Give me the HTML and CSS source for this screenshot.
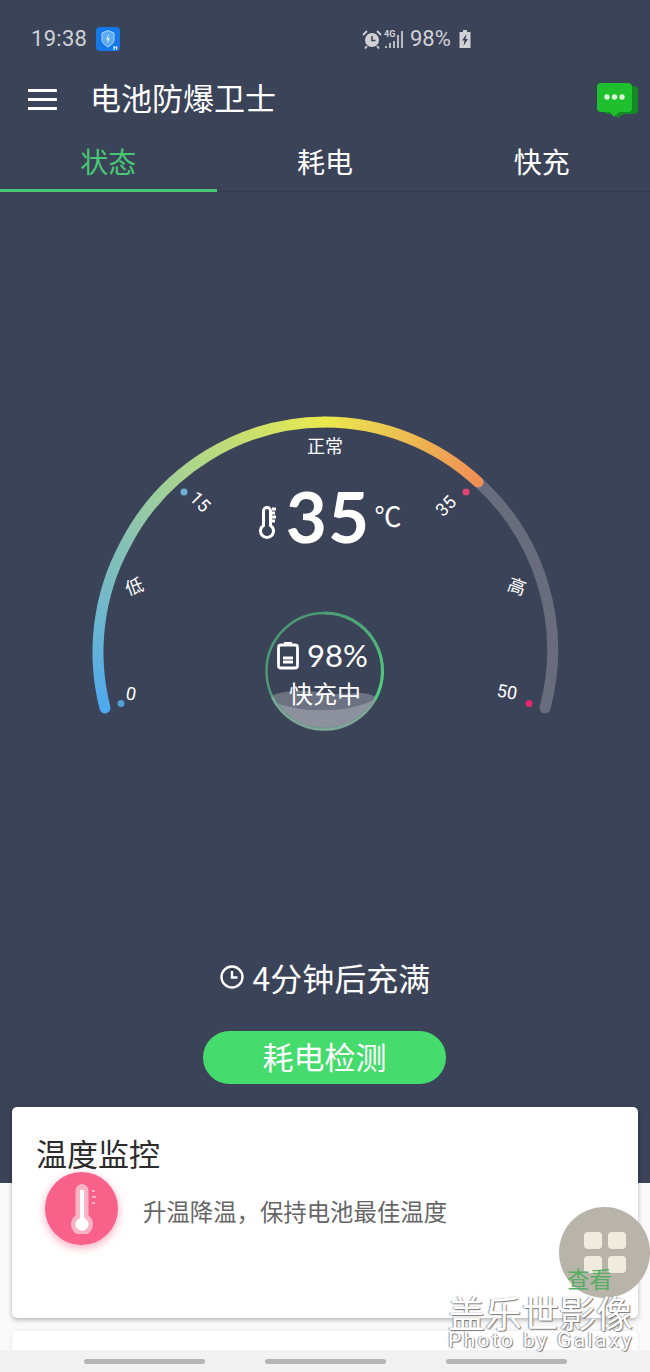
FILE: index.html
```html
<!DOCTYPE html>
<html lang="zh">
<head>
<meta charset="utf-8">
<title>电池防爆卫士</title>
<link rel="stylesheet" href="styles.css">
</head>
<body>
<div class="screen">
  <div class="status">
    <div class="status-left">
      <span class="clock">19:38</span>
      <svg class="app-icon" viewBox="0 0 24 24" width="24" height="24"><rect width="24" height="24" rx="4" fill="#1677e8"/><path d="M6 6l6-2.500 6 2.500v7c0 3-3 5-6 7-3-2-6-4-6-7z" fill="#5aaaf0" stroke="#a8d8fa" stroke-width="1"/><path d="M13 7l-3 5.500h2l-1 4.500 3-5.500h-2z" fill="#e6f4ff"/><text class="app-h" x="17" y="22.500">H</text></svg>
    </div>
    <div class="status-right">
      <svg viewBox="0 0 20 20" width="20" height="20"><circle cx="10" cy="11" r="7" fill="#d0d2d6"/><path d="M10 7v4.500h3.500" fill="none" stroke="#3b4358" stroke-width="1.600"/><path d="M1 6l4-4M19 6l-4-4M5 17l-2 2.500M15 17l2 2.500" stroke="#d0d2d6" stroke-width="1.800"/></svg>
      <svg class="signal" viewBox="0 0 21 20" width="21" height="20"><text x="1" y="8" class="net">4G</text><path d="M3 19v-2M7 19v-5M11 19v-7M15 19v-13M19 19v-17" stroke="#d0d2d6" stroke-width="1.700"/></svg>
      <span class="pct">98%</span>
      <svg viewBox="0 0 12 20" width="12" height="20"><path d="M4 1h4v2h3.500v16H.5V3H4z" fill="#d0d2d6"/><path d="M7.500 5L3 11.500h2.500L4.500 17 9 10H6.500z" fill="#3b4358"/></svg>
    </div>
  </div>
  <div class="toolbar">
    <div class="menu"><i></i><i></i><i></i></div>
    <h1 class="title">电池防爆卫士</h1>
    <svg class="chat" viewBox="0 0 41 35" width="41" height="35"><path d="M8 3h29a4 4 0 0 1 4 4v20a4 4 0 0 1-4 4H27l-6 4-5-4H8z" fill="#158a24"/><path d="M4 0h27a4 4 0 0 1 4 4v21a4 4 0 0 1-4 4H22l-5 5-4-5H4a4 4 0 0 1-4-4V4a4 4 0 0 1 4-4z" fill="#1fc02e"/><circle cx="10" cy="14" r="2.700" fill="#d9f5dc"/><circle cx="17.500" cy="14" r="2.700" fill="#d9f5dc"/><circle cx="25" cy="14" r="2.700" fill="#d9f5dc"/></svg>
  </div>
  <div class="tabs">
    <div class="tab tab-active">状态</div>
    <div class="tab">耗电</div>
    <div class="tab">快充</div>
  </div>
  <svg class="gauge" viewBox="0 400 650 340" width="650" height="340">
    <defs>
      <linearGradient id="g1" gradientUnits="userSpaceOnUse" x1="105" y1="708" x2="125" y2="545"><stop offset="0" stop-color="#4fa9ee"/><stop offset="1" stop-color="#86c2b4"/></linearGradient>
      <linearGradient id="g2" gradientUnits="userSpaceOnUse" x1="125" y1="545" x2="325" y2="422"><stop offset="0" stop-color="#86c2b4"/><stop offset=".4" stop-color="#acd68c"/><stop offset="1" stop-color="#e9e94e"/></linearGradient>
      <linearGradient id="g3" gradientUnits="userSpaceOnUse" x1="325" y1="422" x2="478" y2="482"><stop offset="0" stop-color="#e9e94e"/><stop offset="1" stop-color="#f18e55"/></linearGradient>
      <linearGradient id="ring" gradientUnits="userSpaceOnUse" x1="324" y1="613" x2="375" y2="700"><stop offset="0" stop-color="#4c9a74"/><stop offset="1" stop-color="#4fd07c"/></linearGradient>
      <clipPath id="dial"><circle cx="324.500" cy="671" r="58"/></clipPath>
    </defs>
    <path class="track" d="M478 482A226 226 0 0 1 545 708"/>
    <path class="arc g1" d="M105 708A226 226 0 0 1 125 545"/>
    <path class="arc g2" d="M125 545A226 226 0 0 1 325 422"/>
    <path class="arc g3" d="M325 422A226 226 0 0 1 478 482"/>
    <circle cx="121" cy="703.500" r="3.500" fill="#4f9fd8"/>
    <circle cx="184" cy="492" r="3.500" fill="#6fb0d0"/>
    <circle cx="466" cy="492" r="3.500" fill="#e0476f"/>
    <circle cx="529" cy="703.500" r="3.500" fill="#e02a6c"/>
    <text class="g-lab" x="131" y="700" transform="rotate(10 131 694)">0</text>
    <text class="g-lab" x="200" y="508" transform="rotate(45 200 502)">15</text>
    <text class="g-lab" x="446" y="512" transform="rotate(-45 446 506)">35</text>
    <text class="g-lab" x="507" y="698" transform="rotate(10 507 692)">50</text>
    <text class="g-cn" x="134" y="593" transform="rotate(-20 134 586)">低</text>
    <text class="g-cn" x="517" y="593" transform="rotate(20 517 586)">高</text>
    <text class="g-cn" x="325" y="453">正常</text>
    <g class="line-w">
      <path d="M263.500 511a3.500 3.500 0 0 1 7 0v14.500a6.500 6.500 0 1 1-7 0z"/>
      <path d="M272 509h4M272 513h3M272 517h4M272 521h3"/>
    </g>
    <text class="temp" x="328" y="543">35</text>
    <text class="unit" x="388" y="527">℃</text>
    <path class="water-back" clip-path="url(#dial)" d="M266 699C280 690 300 689 325 693S360 688 378 698V735H266z"/>
    <path class="water-front" clip-path="url(#dial)" d="M266 702C285 704 295 710 312 710S350 712 378 698V735H266z"/>
    <circle class="ring-dim" cx="324.500" cy="671" r="58"/>
    <path class="ring-low" d="M272 697A58 58 0 0 0 375 699.500"/>
    <path class="ring-on" d="M324.500 613A58 58 0 0 1 375 699.500"/>
    <g class="line-w thin">
      <rect x="278.500" y="645" width="19" height="23" rx="2.500"/>
      <path d="M284 643.500h8M283 658h10M283 662h10"/>
    </g>
    <text class="pct-big" x="307" y="667">98%</text>
    <text class="charging" x="325" y="703">快充中</text>
  </svg>
  <div class="eta">
    <svg viewBox="0 0 24 24" width="24" height="24"><circle cx="12" cy="12" r="10.500" fill="none" stroke="#fff" stroke-width="2.400"/><path d="M12 6v6.500h5.500" fill="none" stroke="#fff" stroke-width="2.400"/></svg>
    <span>4分钟后充满</span>
  </div>
  <button class="cta">耗电检测</button>
  <section class="card">
    <h2 class="card-title">温度监控</h2>
    <div class="card-row">
      <div class="badge">
        <svg viewBox="0 0 34 50" width="34" height="50"><path d="M10.500 6.500a6.500 6.500 0 0 1 13 0v25a11 11 0 1 1-13 0z" fill="#fbb4c6"/><path d="M15 6h4v28a6.500 6.500 0 1 1-4 0z" fill="#fff"/><path d="M27 7h3M27 13h4M27 19h3" stroke="#fbc6d4" stroke-width="1.500"/></svg>
      </div>
      <p class="card-text">升温降温，保持电池最佳温度</p>
    </div>
  </section>
  <section class="card-next"></section>
  <div class="navbar"><i></i><i></i><i></i></div>
  <div class="float"><i></i><i></i><i></i><i></i></div>
  <span class="view">查看</span>
  <div class="mark"><b>盖乐世影像</b><em>Photo by Galaxy</em></div>
</div>
</body>
</html>
```
FILE: styles.css
```css
* { box-sizing: border-box; }
html, body { margin: 0; padding: 0; }
body { width: 650px; height: 1372px; overflow: hidden; font-family: "Noto Sans CJK SC", "Noto Sans", sans-serif; }
.screen { position: relative; width: 650px; height: 1372px; overflow: hidden; display: flex; flex-direction: column; background: linear-gradient(#3b4358 1183px, #fafafa 1183px); }

.status { height: 78px; flex: none; display: flex; align-items: center; padding: 0 0 0 31px; color: #d0d2d6; }
.status-left { display: flex; align-items: center; gap: 9px; width: 331px; }
.clock { font: 22px/1 "Roboto", sans-serif; letter-spacing: .3px; }
.app-h { font: 700 6px "Roboto", sans-serif; fill: #fff; }
.status-right { display: flex; align-items: center; gap: 1px; }
.pct { font: 22px/1 "Roboto", sans-serif; margin: 0 7px 0 5px; }
.net { font: 700 9px "Roboto", sans-serif; fill: #d0d2d6; }

.toolbar { height: 42px; flex: none; display: flex; align-items: center; padding: 0 12px 0 28px; }
.menu { width: 29px; display: flex; flex-direction: column; gap: 6px; }
.menu i { display: block; height: 3px; background: #fff; }
.title { margin: 0 0 4px 33px; font-size: 31px; font-weight: 400; color: #fff; flex: 1; line-height: 42px; }
.chat { margin-top: 3px; }

.tabs { height: 72px; flex: none; display: flex; border-bottom: 1px solid #363d50; }
.tab { flex: 1; height: 72px; padding-top: 19px; text-align: center; font-size: 28px; line-height: 44px; color: #fff; }
.tab-active { color: #48c774; border-bottom: 3px solid #48c774; }

.gauge { display: block; flex: none; margin-top: 208px; }
.track, .arc { fill: none; stroke-width: 11; stroke-linecap: round; }
.track { stroke: #676d7d; }
.g1 { stroke: url(#g1); }
.g2 { stroke: url(#g2); stroke-linecap: butt; }
.g3 { stroke: url(#g3); }
.g-lab { font: 18px "Roboto", sans-serif; fill: #fff; text-anchor: middle; }
.g-cn { font-size: 18px; fill: #fff; text-anchor: middle; }
.line-w { fill: none; stroke: #fff; stroke-width: 3; }
.thin { stroke-width: 2.800; }
.temp { font: 700 71px "Lato", sans-serif; letter-spacing: 1px; fill: #fff; text-anchor: middle; }
.unit { font-size: 27px; fill: #fff; text-anchor: middle; }
.ring-dim { fill: none; stroke: #4c9a74; stroke-width: 2.500; }
.ring-low { fill: none; stroke: #7fa596; stroke-width: 2.500; }
.ring-on { fill: none; stroke: url(#ring); stroke-width: 3; }
.water-back { fill: #6c7282; }
.water-front { fill: #8d919e; }
.pct-big { font: 31px "Lato", sans-serif; fill: #fff; }
.charging { font-size: 24px; fill: #fff; text-anchor: middle; }

.eta { flex: none; margin-top: 217px; height: 40px; display: flex; align-items: center; justify-content: center; gap: 9px; color: #fff; font-size: 32px; line-height: 40px; }
.cta { flex: none; display: block; width: 243px; height: 53px; margin: 34px 0 0 203px; padding: 0 0 4px; border: 0; border-radius: 27px; background: #46dc6d; color: #fff; font: 400 31px/49px "Noto Sans CJK SC", sans-serif; }

.card { flex: none; width: 626px; height: 211px; margin: 23px 0 0 12px; padding: 25px 24px 0; background: #fff; border-radius: 5px; box-shadow: 0 2px 5px rgba(0,0,0,.28); }
.card-title { margin: 0; font-size: 31px; line-height: 42px; font-weight: 400; color: #2c2c2c; }
.card-row { display: flex; align-items: center; margin-top: -2px; padding-left: 9px; }
.badge { width: 73px; height: 73px; border-radius: 50%; background: #f8628a; box-shadow: 0 3px 9px rgba(248,98,138,.55); display: flex; align-items: center; justify-content: center; flex: none; }
.card-text { margin: 4px 0 0 25px; font-size: 23.400px; line-height: 34px; color: #666; }
.card-next { flex: none; width: 626px; height: 40px; margin: 13px 0 0 12px; background: #fff; border-radius: 5px; box-shadow: 0 0 4px rgba(0,0,0,.08); }

.navbar { position: absolute; left: 0; right: 0; bottom: 0; height: 22px; background: #f2f2f2; display: flex; justify-content: center; align-items: center; gap: 60px; }
.navbar i { width: 121px; height: 5px; border-radius: 3px; background: #b5b5b5; }
.float { position: absolute; left: 559px; top: 1207px; width: 91px; height: 91px; border-radius: 50%; background: #b8b4aa; display: grid; grid-template-columns: 18px 18px; grid-auto-rows: 17px; gap: 7px 6px; justify-content: center; align-content: center; }
.float i { background: #f1ebdf; border-radius: 4px; }
.view { position: absolute; left: 567px; top: 1265px; font-size: 22.500px; line-height: 26px; color: #55ae62; }
.mark { position: absolute; left: 448px; top: 1296px; color: #fff; text-shadow: 1px 1px 1px #777, -1px 0 1px #999; display: flex; flex-direction: column; }
.mark b { font-size: 37px; font-weight: 400; line-height: 33px; }
.mark em { font: 21px/22px "Roboto", sans-serif; font-style: normal; letter-spacing: 2.400px; }
```
